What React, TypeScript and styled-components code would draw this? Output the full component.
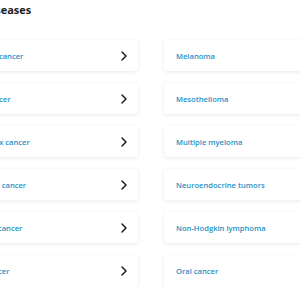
import React from "react";
import styled, { createGlobalStyle } from "styled-components";
import { ChevronRight } from "lucide-react";

const GlobalStyle = createGlobalStyle`
  body {
    margin: 0;
    background: #ffffff;
    font-family: "Open Sans", "Liberation Sans", sans-serif;
    overflow: hidden;
  }
`;

const Section = styled.section`
  margin-left: -60px;
  width: 422px;
`;

const Heading = styled.h2`
  margin: 0;
  height: 40px;
  font-size: 11px;
  line-height: 20px;
  font-weight: 700;
  color: #222222;
`;

const Grid = styled.ul`
  list-style: none;
  margin: 0;
  padding: 0;
  display: grid;
  grid-template-columns: 198px 198px;
  column-gap: 26px;
  row-gap: 12px;
`;

const Card = styled.li`
  display: flex;
  align-items: center;
  justify-content: space-between;
  height: 31px;
  padding: 0 6px 0 12px;
  background: #ffffff;
  border-radius: 3px;
  box-shadow: 0 1px 4px rgba(0, 0, 0, 0.09);
  box-sizing: border-box;
`;

const Label = styled.span`
  font-size: 7.6px;
  font-weight: 600;
  color: #2a90c3;
  white-space: nowrap;
`;

const Arrow = styled(ChevronRight)`
  color: #1a1a1a;
  flex-shrink: 0;
`;

const left = [
  "Endometrial cancer",
  "Stomach cancer",
  "Uterine cervix cancer",
  "Oesophageal cancer",
  "Nasal cavity cancer",
  "Prostate cancer",
];
const right = [
  "Melanoma",
  "Mesothelioma",
  "Multiple myeloma",
  "Neuroendocrine tumors",
  "Non-Hodgkin lymphoma",
  "Oral cancer",
];

function App() {
  const rows = left.map((l, i) => [l, right[i]]);
  return (
    <>
      <GlobalStyle />
      <Section>
        <Heading>Related diseases</Heading>
        <Grid>
          {rows.map(([l, r]) => (
            <React.Fragment key={l}>
              <Card>
                <Label>{l}</Label>
                <Arrow size={16} strokeWidth={2.2} />
              </Card>
              <Card>
                <Label>{r}</Label>
                <Arrow size={16} strokeWidth={2.2} />
              </Card>
            </React.Fragment>
          ))}
        </Grid>
      </Section>
    </>
  );
}

export default App;
